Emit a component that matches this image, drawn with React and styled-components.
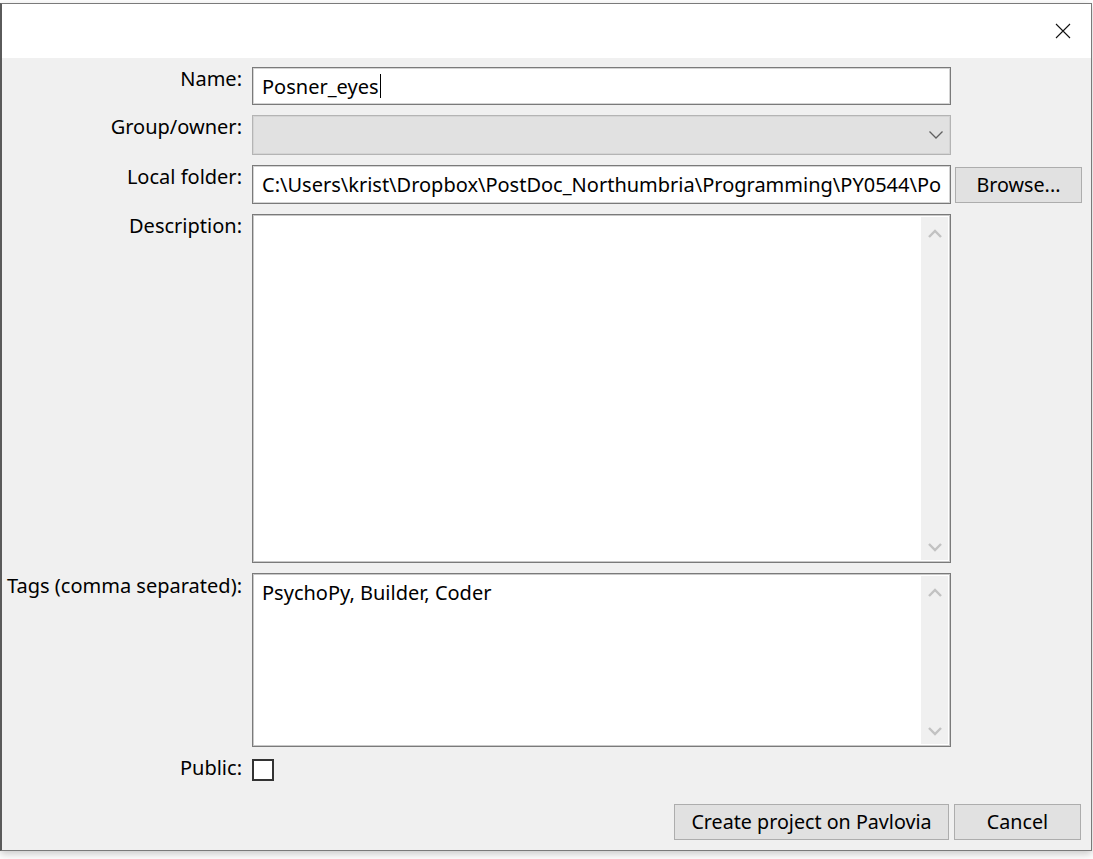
import React from 'react';
import styled, { createGlobalStyle } from 'styled-components';

const GlobalStyle = createGlobalStyle`
  html, body {
    margin: 0;
    padding: 0;
    background: #ffffff;
  }
  body {
    font-family: "Noto Sans", "Open Sans", "DejaVu Sans", sans-serif;
    font-size: 20px;
    color: #000;
  }
`;

const Screen = styled.div`
  width: 1093px;
  height: 859px;
  padding-top: 3px;
  box-sizing: border-box;
  overflow: hidden;
`;

const Window = styled.div`
  width: 1092px;
  height: 848px;
  box-sizing: border-box;
  border: 1px solid #7a7a7a;
  border-left: 2px solid #5a5a5a;
  background: #f0f0f0;
  box-shadow: 0 3px 8px rgba(0, 0, 0, 0.22);
  display: flex;
  flex-direction: column;
`;

const TitleBar = styled.div`
  height: 54px;
  background: #fff;
  display: flex;
  justify-content: flex-end;
  align-items: center;
  padding-right: 14px;
  flex-shrink: 0;
`;

const CloseButton = styled.button`
  width: 28px;
  height: 28px;
  border: 0;
  background: transparent;
  padding: 0;
  display: flex;
  align-items: center;
  justify-content: center;
`;

const Form = styled.div`
  display: grid;
  grid-template-columns: 240px 699px 127px;
  column-gap: 10px;
  padding: 9px 0 0 0;
  grid-template-rows: 38px 40px 39px 349px 174px 22px;
  row-gap: 10px;
`;

const Label = styled.div`
  text-align: right;
  line-height: 24px;
  white-space: nowrap;
  align-self: start;
  margin-top: ${p => p.$offset || 0}px;
`;

const Field = styled.div`
  box-sizing: border-box;
  border: 1px solid #7a7a7a;
  box-shadow: inset 0 0 0 1px #d4d4d4;
  background: ${p => (p.$disabled ? '#e1e1e1' : '#fff')};
  border-color: ${p => (p.$disabled ? '#b4b4b4' : '#7a7a7a')};
  display: flex;
  align-items: center;
  padding: 0 9px;
  white-space: nowrap;
  overflow: hidden;
  min-width: 0;
`;

const FieldText = styled.span`
  display: block;
  overflow: hidden;
  white-space: nowrap;
  max-width: 100%;
`;

const Caret = styled.span`
  display: inline-block;
  width: 1px;
  height: 24px;
  background: #000;
  margin-left: 1px;
  flex-shrink: 0;
`;

const Chevron = styled.span`
  margin-left: auto;
  display: flex;
  align-items: center;
  margin-right: -3px;
`;

const Button = styled.button`
  box-sizing: border-box;
  height: 36px;
  border: 1px solid #adadad;
  background: #e1e1e1;
  font-family: inherit;
  font-size: 19.7px;
  color: #000;
  padding: 0 8px;
  line-height: 1;
  white-space: nowrap;
  width: ${p => p.$width || 'auto'};
`;

const SideButton = styled(Button)`
  align-self: center;
  margin-left: -6px;
  width: 127px;
`;

const TextArea = styled.div`
  box-sizing: border-box;
  border: 1px solid #7a7a7a;
  box-shadow: inset 0 0 0 1px #c8c8c8;
  background: #fff;
  display: flex;
  padding: 2px;
`;

const TextContent = styled.div`
  flex: 1;
  padding: 4px 7px;
  line-height: 26px;
`;

const Scrollbar = styled.div`
  width: 27px;
  background: #f0f0f0;
  display: flex;
  flex-direction: column;
  justify-content: space-between;
  align-items: center;
  padding: 12px 0 8px;
`;

const Checkbox = styled.div`
  box-sizing: border-box;
  width: 22px;
  height: 22px;
  margin-top: 2px;
  border: 2px solid #333;
  background: #fff;
`;

const Footer = styled.div`
  display: flex;
  justify-content: flex-end;
  gap: 5px;
  padding: 25px 10px 0 0;
`;

const ScrollArrow = ({ up }) => (
  <svg width="16" height="10" viewBox="0 0 16 10">
    <path
      d={up ? 'M2 8 L8 2 L14 8' : 'M2 2 L8 8 L14 2'}
      fill="none"
      stroke="#c2c2c2"
      strokeWidth="2.4"
    />
  </svg>
);

const Scroll = () => (
  <Scrollbar>
    <ScrollArrow up />
    <ScrollArrow />
  </Scrollbar>
);

const App = () => {
  return (
    <Screen>
      <GlobalStyle />
      <Window>
        <TitleBar>
          <CloseButton aria-label="Close">
            <svg width="16" height="16" viewBox="0 0 16 16">
              <path d="M1 1 L15 15 M15 1 L1 15" stroke="#111" strokeWidth="1.1" />
            </svg>
          </CloseButton>
        </TitleBar>
        <Form>
          <Label>Name:</Label>
          <Field>
            Posner_eyes
            <Caret />
          </Field>
          <div />

          <Label>Group/owner:</Label>
          <Field $disabled>
            <Chevron>
              <svg width="16" height="10" viewBox="0 0 16 10">
                <path d="M1.5 1.5 L8 8 L14.5 1.5" fill="none" stroke="#606060" strokeWidth="1.3" />
              </svg>
            </Chevron>
          </Field>
          <div />

          <Label>Local folder:</Label>
          <Field>
            <FieldText>C:\Users\krist\Dropbox\PostDoc_Northumbria\Programming\PY0544\Posner_eyes</FieldText>
          </Field>
          <SideButton>Browse...</SideButton>

          <Label>Description:</Label>
          <TextArea>
            <TextContent />
            <Scroll />
          </TextArea>
          <div />

          <Label $offset={1}>Tags (comma separated):</Label>
          <TextArea>
            <TextContent>PsychoPy, Builder, Coder</TextContent>
            <Scroll />
          </TextArea>
          <div />

          <Label $offset={-1}>Public:</Label>
          <Checkbox />
          <div />
        </Form>
        <Footer>
          <Button $width="275px">Create project on Pavlovia</Button>
          <Button $width="127px">Cancel</Button>
        </Footer>
      </Window>
    </Screen>
  );
};

export default App;
